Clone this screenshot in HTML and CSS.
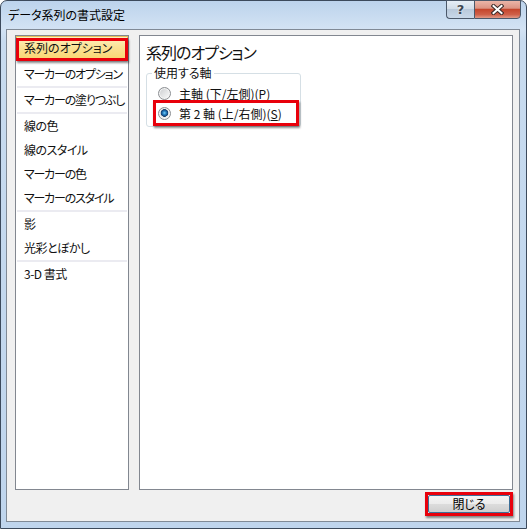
FILE: index.html
```html
<!DOCTYPE html>
<html lang="ja">
<head>
<meta charset="utf-8">
<title>データ系列の書式設定</title>
<link rel="stylesheet" href="styles.css">
</head>
<body>
<div class="window">
  <div class="titlebar">
    <span class="title">データ系列の書式設定</span>
    <div class="caption-buttons">
      <span class="cbtn help">?</span>
      <span class="cbtn close">
        <svg width="13" height="11" viewBox="0 0 13 11">
          <path d="M2.5 2 L10.5 9 M10.5 2 L2.5 9" stroke="#3b2a28" stroke-width="4" stroke-linecap="square" fill="none"/>
          <path d="M2.5 2 L10.5 9 M10.5 2 L2.5 9" stroke="#ffffff" stroke-width="2" stroke-linecap="square" fill="none"/>
        </svg>
      </span>
    </div>
  </div>
  <div class="client">
    <div class="panels">
      <ul class="nav">
        <li class="item selected mark">系列のオプション</li>
        <li class="sep"></li>
        <li class="item kana">マーカーのオプション</li>
        <li class="sep"></li>
        <li class="item kana">マーカーの塗りつぶし</li>
        <li class="sep"></li>
        <li class="item">線の色</li>
        <li class="item">線のスタイル</li>
        <li class="item kana">マーカーの色</li>
        <li class="item kana">マーカーのスタイル</li>
        <li class="sep"></li>
        <li class="item">影</li>
        <li class="item">光彩とぼかし</li>
        <li class="sep"></li>
        <li class="item">3-D 書式</li>
      </ul>
      <div class="content">
        <h2 class="heading">系列のオプション</h2>
        <fieldset class="group">
          <legend>使用する軸</legend>
          <label class="radio-row"><span class="radio"></span><span>主軸 (下/左側)(<u>P</u>)</span></label>
          <label class="radio-row mark"><span class="radio checked"></span><span>第&nbsp;2&nbsp;軸 (上/右側)(<u>S</u>)</span></label>
        </fieldset>
      </div>
    </div>
    <div class="footer">
      <span class="btn-wrap mark"><button class="btn">閉じる</button></span>
    </div>
  </div>
</div>
</body>
</html>
```

FILE: styles.css
```css
* {
  box-sizing: border-box;
  margin: 0;
  padding: 0;
}

html, body {
  background: #ffffff;
}

body {
  width: 528px;
  height: 529px;
  overflow: hidden;
  font-family: "Noto Sans CJK JP", "Noto Sans", sans-serif;
  font-size: 12px;
  color: #111111;
  font-feature-settings: "palt";
}

.window {
  width: 527px;
  height: 529px;
  border: 1px solid #3c4a5c;
  border-radius: 7px 7px 0 0;
  background: linear-gradient(#bcd3ec 0, #d3e3f4 28px, #c8dbef 40px, #bfd5ed 100%);
  padding: 0 6px 6px 5px;
  display: flex;
  flex-direction: column;
}

.titlebar {
  height: 28px;
  margin: 0 -6px 0 -5px;
  padding: 0 5px 0 7px;
  display: flex;
  justify-content: space-between;
  align-items: flex-start;
}

.title {
  margin-top: 6px;
  line-height: 16px;
  font-size: 12px;
  color: #000000;
}

.caption-buttons {
  display: flex;
  margin-top: -1px;
  height: 19px;
}

.cbtn {
  height: 19px;
  border: 1px solid #4b586a;
  display: flex;
  align-items: center;
  justify-content: center;
}

.help {
  width: 28px;
  border-right: none;
  border-radius: 0 0 0 4px;
  background: linear-gradient(#e6eef7 0, #d2dde9 45%, #b9c9db 50%, #c9d8e9 100%);
  color: #3d4652;
  font-family: "DejaVu Sans", sans-serif;
  font-weight: bold;
  font-size: 13px;
  line-height: 17px;
  text-shadow: 0 0 2px #ffffff;
}

.close {
  width: 47px;
  border-radius: 0 0 4px 0;
  background: linear-gradient(#ebb5a8 0, #dc9484 42%, #c5462d 50%, #cf6049 80%, #e19a88 100%);
}

.client {
  flex: 1;
  border: 1px solid #808a96;
  background: #f0f0f0;
  padding: 5px 6px 5px 8px;
  display: flex;
  flex-direction: column;
  gap: 2px;
}

.panels {
  height: 455px;
  display: flex;
  gap: 10px;
}

.nav {
  width: 114px;
  border: 1px solid #828790;
  background: #ffffff;
  list-style: none;
}

.item {
  height: 24px;
  line-height: 24px;
  padding-left: 8px;
  white-space: nowrap;
  letter-spacing: -0.5px;
}

.item.kana {
  letter-spacing: -1.2px;
}

.item.selected {
  background: linear-gradient(#fdf2c6 0, #fbe297 45%, #f9d66f 100%);
  box-shadow: inset 0 0 0 1px #e5be5a;
  letter-spacing: 0;
}

.sep {
  height: 2px;
  margin: 0 1px;
  background: #ebebf1;
}

.mark {
  position: relative;
}

.mark::after {
  content: "";
  position: absolute;
  border: 3px solid #e8000b;
  box-shadow: 1px 2px 2px rgba(0, 0, 0, 0.45);
  pointer-events: none;
}

.item.mark::after {
  top: 2px;
  bottom: -1px;
  left: 0;
  right: 0;
}

.content {
  flex: 1;
  border: 1px solid #828790;
  background: #ffffff;
  padding: 6px 0 0 6px;
}

.heading {
  font-size: 16px;
  line-height: 20px;
  font-weight: normal;
  letter-spacing: -1px;
}

.group {
  margin-top: 3px;
  width: 155px;
  border: 1px solid #d5dfe5;
  border-radius: 3px;
  padding: 2px 0 3px 0;
}

.group legend {
  margin-left: 5px;
  padding: 0 2px;
  font-size: 12px;
  line-height: 16px;
}

.radio-row {
  display: flex;
  align-items: center;
  height: 20px;
  width: 140px;
  margin-left: 9px;
  padding-left: 2px;
  white-space: nowrap;
}

.radio-row.mark::after {
  top: -3px;
  bottom: -3px;
  left: -3px;
  right: -3px;
}

.radio {
  width: 13px;
  height: 13px;
  flex: none;
  margin-right: 8px;
  border-radius: 50%;
  border: 1px solid #8b8e92;
  background: linear-gradient(135deg, #c9cbcd 0, #e6e7e8 55%, #fbfbfb 100%);
  box-shadow: inset 0 0 0 1px #f4f4f4;
}

.radio.checked {
  background:
    radial-gradient(circle at 50% 45%, #7fd0f5 0, #2a86c8 1.6px, #174f8a 3px, #1b3f66 3.6px, rgba(0, 0, 0, 0) 4.1px),
    linear-gradient(135deg, #c9cbcd 0, #e6e7e8 55%, #fbfbfb 100%);
}

.footer {
  height: 24px;
  display: flex;
  justify-content: flex-end;
}

.btn-wrap {
  display: block;
  width: 88px;
  height: 24px;
  padding: 3px;
}

.btn-wrap.mark::after {
  top: 0;
  bottom: 0;
  left: 0;
  right: 0;
}

.btn {
  display: block;
  width: 82px;
  height: 18px;
  border: 1px solid #3c6f98;
  border-radius: 2px;
  background: linear-gradient(#f4f4f4 0, #ececec 48%, #dcdcdc 52%, #cfcfcf 100%);
  font-family: "Noto Sans CJK JP", "Noto Sans", sans-serif;
  font-size: 12px;
  line-height: 16px;
  color: #000000;
  font-feature-settings: "palt";
}
```
